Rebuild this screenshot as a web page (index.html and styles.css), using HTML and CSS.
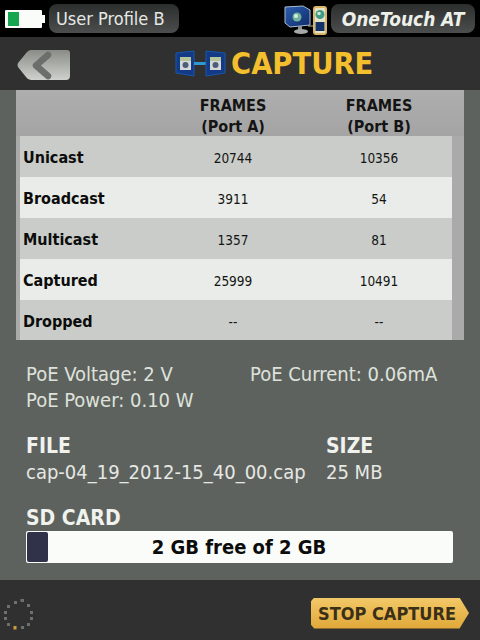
FILE: index.html
```html
<!DOCTYPE html>
<html lang="en">
<head>
<meta charset="utf-8">
<title>Capture</title>
<link rel="stylesheet" href="styles.css">
</head>
<body>
<div class="screen">
  <div class="topbar">
    <div class="battery"><div class="battery-level"></div></div>
    <div class="pill profile">User Profile B</div>
    <svg class="linkicon" width="46" height="34" viewBox="0 0 46 34">
      <defs>
        <linearGradient id="mon" x1="0" y1="0" x2="1" y2="1"><stop offset="0" stop-color="#2e5fb0"/><stop offset="1" stop-color="#0e2a68"/></linearGradient>
      </defs>
      <path d="M1 5 L19 4 L26 8 L26 23 L6 25 L1 21 Z" fill="url(#mon)" stroke="#a9bccf"/>
      <circle cx="13" cy="15" r="4.500" fill="#6fb39a"/>
      <circle cx="12" cy="14" r="2" fill="#d8ecdc"/>
      <rect x="14" y="24" width="4" height="4" fill="#8d9296"/>
      <ellipse cx="17" cy="29.500" rx="7" ry="2.500" fill="#a4a8a8"/>
      <path d="M24 24 H29" stroke="#b8b8a0"/>
      <rect x="29" y="4" width="14" height="29" rx="3" fill="#d9b766"/>
      <rect x="31" y="6" width="10" height="25" rx="1" fill="#e6e4c8"/>
      <circle cx="36" cy="12.500" r="4.500" fill="#3f9a88"/>
      <circle cx="35" cy="11.500" r="1.800" fill="#cfe6d8"/>
      <rect x="31.500" y="20" width="9" height="9" fill="#12306a"/>
    </svg>
    <div class="pill product">OneTouch AT</div>
  </div>
  <div class="header">
    <svg class="back" width="56" height="34" viewBox="0 0 56 34">
      <defs><linearGradient id="bk" x1="0" y1="0" x2="0" y2="1"><stop offset="0" stop-color="#8a8c88"/><stop offset="1" stop-color="#cfd1cd"/></linearGradient></defs>
      <path d="M14 1 H50 Q53 1 53 4 V27 Q53 31 49 31 H14 Q11 31 9 28 L1 18 Q0 16 1 14 L10 3 Q12 1 14 1 Z" fill="url(#bk)"/>
      <path d="M31 6 L19 16.500 L31 27" fill="none" stroke="#6c6e6c" stroke-width="6.500" stroke-linecap="round" stroke-linejoin="round"/>
    </svg>
    <div class="title-wrap">
      <svg class="capture-icon" width="52" height="28" viewBox="0 0 52 28">
        <path d="M1 3 L19 1 V26 L1 23 Z" fill="#123a86" stroke="#1a56a6"/>
        <rect x="5" y="7" width="11" height="4" fill="#b6c49a"/>
        <rect x="5" y="11" width="11" height="9" fill="#d4d8d8"/>
        <circle cx="10.500" cy="15" r="3" fill="#4e5e78"/>
        <rect x="19" y="12" width="12" height="3" fill="#2f9ad0"/>
        <path d="M31 1 L50 3 V23 L31 26 Z" fill="#123a86" stroke="#1a56a6"/>
        <rect x="35" y="7" width="11" height="4" fill="#b6c49a"/>
        <rect x="35" y="11" width="11" height="9" fill="#d4d8d8"/>
        <circle cx="40.500" cy="15" r="3" fill="#4e5e78"/>
      </svg>
      <h1 class="title">CAPTURE</h1>
    </div>
  </div>
  <div class="content">
    <div class="table">
      <div class="thead">
        <div></div>
        <div>FRAMES<br>(Port A)</div>
        <div>FRAMES<br>(Port B)</div>
      </div>
      <div class="row dark"><b>Unicast</b><span>20744</span><span>10356</span></div>
      <div class="row light"><b>Broadcast</b><span>3911</span><span>54</span></div>
      <div class="row dark"><b>Multicast</b><span>1357</span><span>81</span></div>
      <div class="row light"><b>Captured</b><span>25999</span><span>10491</span></div>
      <div class="row dark"><b>Dropped</b><span>--</span><span>--</span></div>
    </div>
    <div class="poe">
      <div>PoE Voltage: 2 V</div>
      <div>PoE Current: 0.06mA</div>
      <div>PoE Power: 0.10 W</div>
    </div>
    <div class="file">
      <b>FILE</b><b>SIZE</b>
      <div>cap-04_19_2012-15_40_00.cap</div><div>25 MB</div>
    </div>
    <div class="sd-label">SD CARD</div>
    <div class="sd-bar">
      <div class="sd-chip"></div>
      <div class="sd-text">2 GB free of 2 GB</div>
    </div>
  </div>
  <div class="footer">
    <svg class="spinner" width="32" height="34" viewBox="0 0 32 34">
      <g fill="#6e706c">
        <rect x="20" y="3" width="3" height="3"/><rect x="26" y="8" width="3" height="3"/><rect x="29" y="15" width="3" height="3"/>
        <rect x="29" y="21" width="3" height="3"/><rect x="26" y="27" width="3" height="3"/><rect x="20" y="30" width="3" height="3"/>
        <rect x="6" y="27" width="3" height="3"/><rect x="3" y="21" width="3" height="3"/><rect x="3" y="15" width="3" height="3"/>
        <rect x="6" y="9" width="3" height="3"/><rect x="13" y="5" width="3" height="3"/><rect x="19.500" y="3" width="3" height="3"/>
      </g>
      <rect x="12.500" y="30" width="3" height="3.500" fill="#d09a3c"/>
    </svg>
    <button class="stop">STOP CAPTURE</button>
  </div>
</div>
</body>
</html>
```
FILE: styles.css
```css
* { box-sizing: border-box; }
html, body { margin: 0; padding: 0; }
body { width: 480px; height: 640px; overflow: hidden; background: #000; font-family: "DejaVu Sans Condensed", "DejaVu Sans", sans-serif; }
.screen { width: 480px; height: 640px; display: flex; flex-direction: column; }

.topbar { height: 37px; background: #000; display: flex; align-items: center; padding: 0 5px; }
.battery { width: 37px; height: 18px; margin-right: 7px; background: #fafcfa; position: relative; padding: 2px 0 0 3px; border-radius: 1px; }
.battery::after { content: ""; position: absolute; right: -3px; top: 5px; width: 3px; height: 8px; background: #fafcfa; }
.battery-level { width: 11px; height: 14px; background: #16a650; }
.pill { height: 29px; border-radius: 8px; background: linear-gradient(#2c2e2e, #4c4e4e); color: #e6e8e4; display: flex; align-items: center; }
.profile { width: 130px; padding-left: 7px; font-size: 18px; }
.linkicon { margin-left: auto; margin-right: 1px; }
.product { width: 144px; justify-content: center; font-size: 19px; font-weight: bold; font-style: italic; color: #eef0ea; }

.header { height: 53px; background: #303030; display: flex; align-items: center; padding: 0 0 0 17px; }
.back { flex: none; margin-top: 4px; }
.title-wrap { display: flex; align-items: center; margin-left: 102px; }
.capture-icon { margin-right: 4px; }
.title { margin: 0; font-size: 30.500px; line-height: 34px; font-weight: bold; color: #f4bf2c; }

.content { flex: none; height: 490px; background: #5e625e; padding: 0 16px; }
.table { width: 448px; height: 250px; background: linear-gradient(#aeaeae, #a4a4a4 46px, #aaaaaa 46px); padding: 0 12px 0 4px; }
.thead { height: 46px; display: grid; grid-template-columns: 140px 146px 146px; font-size: 16px; font-weight: bold; line-height: 21px; text-align: center; color: #141414; padding-top: 5px; }
.row { height: 41px; display: grid; grid-template-columns: 140px 146px 146px; align-items: center; color: #141414; font-size: 13.500px; text-align: center; }
.row b { font-size: 16px; text-align: left; padding-left: 3px; color: #0c0c0c; margin-top: 1px; }
.row span { margin-top: 3px; }
.row:last-child { height: 40px; }
.row:last-child b { margin-top: 2px; }
.row:last-child span { margin-top: 4px; }
.dark { background: #c9ccc8; }
.light { background: #e9ece8; }

.poe { display: grid; grid-template-columns: 224px auto; margin: 21px 0 0 10px; font-size: 20px; line-height: 26px; color: #dfe2dc; }
.file { display: grid; grid-template-columns: 300px auto; margin: 20px 0 0 10px; font-size: 20px; line-height: 26px; color: #e6e8e4; }
.file b { font-size: 21px; color: #f0f2ee; }
.sd-label { margin: 23px 0 0 10px; font-size: 21px; line-height: 20px; font-weight: bold; color: #f0f2ee; }
.sd-bar { margin: 3px 0 0 10px; width: 427px; height: 32px; background: #fafcfa; border-radius: 2px; display: flex; align-items: center; padding: 0 1px; }
.sd-chip { width: 21px; height: 30px; background: #2f3248; border-radius: 2px; }
.sd-text { flex: 1; text-align: center; font-size: 20px; font-weight: bold; color: #0c0c0c; padding-right: 22px; }

.footer { flex: 1; background: #303030; display: flex; align-items: center; justify-content: space-between; padding: 0 11px 0 1px; }
.spinner { margin-top: 5px; }
.stop { width: 158px; height: 31px; border: 0; padding: 0 6px 0 0; background: linear-gradient(#f2c868, #e0a838); color: #3a3018; font-family: "DejaVu Sans Condensed", "DejaVu Sans", sans-serif; font-weight: bold; font-size: 18px; clip-path: polygon(2% 0, 94% 0, 100% 50%, 94% 100%, 2% 100%, 0 88%, 0 12%); margin-top: 6px; }
```
